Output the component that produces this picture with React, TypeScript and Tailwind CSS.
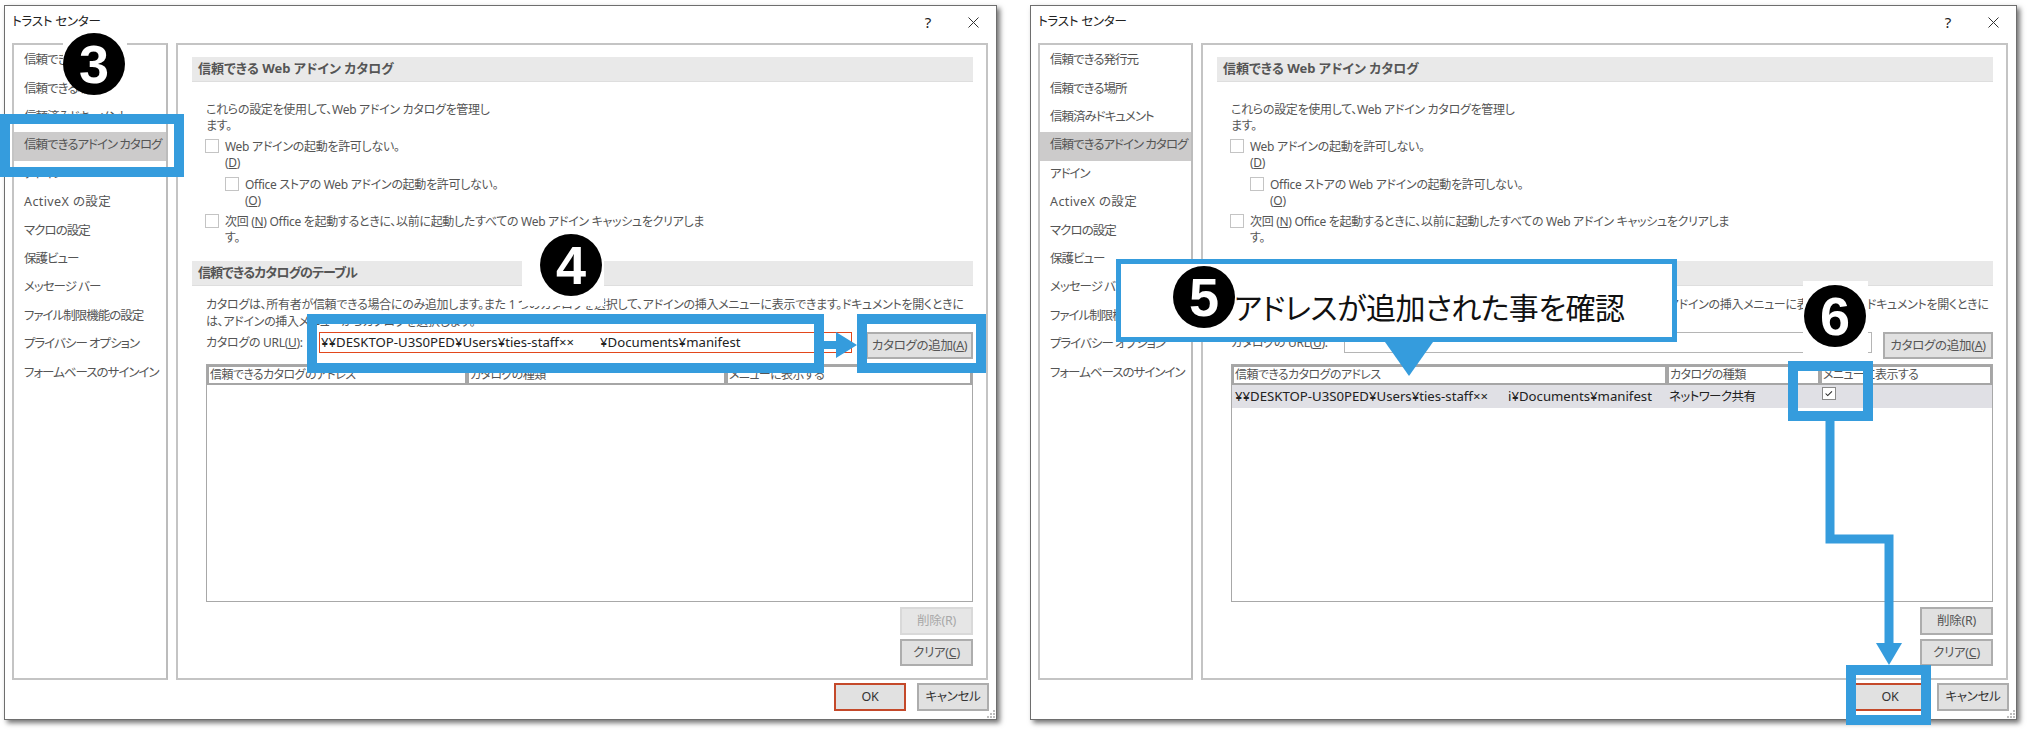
import React from 'react';

const navItems = [
  '信頼できる発行元',
  '信頼できる場所',
  '信頼済みドキュメント',
  '信頼できるアドイン カタログ',
  'アドイン',
  'ActiveX の設定',
  'マクロの設定',
  '保護ビュー',
  'メッセージ バー',
  'ファイル制限機能の設定',
  'プライバシー オプション',
  'フォームベースのサインイン',
];

function Box() {
  return <span className="block w-[14px] h-[14px] shrink-0 border border-[#c4c4c4] bg-white" />;
}

function Button({ children, className }: { children: React.ReactNode; className: string }) {
  return (
    <button className={`flex items-center justify-center border-2 border-[#adadad] bg-[#e1e1e1] text-[12.5px] tracking-[-0.3px] whitespace-nowrap ${className}`}>
      {children}
    </button>
  );
}

function SectionTitle({ children }: { children: React.ReactNode }) {
  return (
    <div className="h-[25px] shrink-0 flex items-center pl-[6px] bg-[#e9e9e9] border-b border-[#dedede] font-bold text-[13px] tracking-normal text-[#555555]">
      {children}
    </div>
  );
}

interface DialogProps {
  widthClass: string;
  navClass: string;
  panelClass: string;
  filled: boolean;
}

function Dialog({ widthClass, navClass, panelClass, filled }: DialogProps) {
  return (
    <div className={`h-[715px] shrink-0 flex flex-col bg-white border border-[#6e6e6e] shadow-[3px_3px_5px_rgba(0,0,0,0.55)] ${widthClass}`}>
      {/* Title bar */}
      <div className="h-[37px] shrink-0 flex items-center pl-[7px] pr-[17px] pb-[4px] text-[12.5px] tracking-[-0.2px] text-[#222222]">
        <span className="flex-1">トラスト センター</span>
        <span className="text-[15px] mr-[37px]">?</span>
        <svg width="11" height="11" viewBox="0 0 11 11" className="stroke-[#333333]">
          <path d="M0.5 0.5 L10.5 10.5 M10.5 0.5 L0.5 10.5" fill="none" strokeWidth="1" />
        </svg>
      </div>

      <div className="h-[637px] shrink-0 flex gap-2 pl-[7px]">
        {/* Nav */}
        <div className={`shrink-0 pt-[2px] border-2 border-[#c4c4c4] border-r-[#bcbcbc] bg-white ${navClass}`}>
          {navItems.map((item, i) => (
            <div
              key={item}
              className={`h-[28.4px] flex items-center pl-[10px] pb-[1px] text-[12.5px] text-[#555555] whitespace-nowrap ${
                i === 5 ? 'tracking-[0.4px]' : 'tracking-[-1px]'
              } ${i === 3 ? 'bg-[#cccbcb] text-[#444444]' : ''}`}
            >
              {item}
            </div>
          ))}
        </div>

        {/* Content */}
        <div className={`shrink-0 flex flex-col pt-[12px] pl-[14px] pr-[13px] pb-[12px] border-2 border-[#c4c4c4] bg-white text-[#555555] text-[12px] tracking-[-0.3px] leading-[15.5px] ${panelClass}`}>
          <SectionTitle>信頼できる Web アドイン カタログ</SectionTitle>
          <div className="pl-[13px] pt-[20px]">
            <p className="pl-[1px]">
              これらの設定を使用して、Web アドイン カタログを管理し
              <br />
              ます。
            </p>
            <div className="flex gap-[6px] mt-[6px]">
              <Box />
              <span>
                Web アドインの起動を許可しない。
                <br />
                (<u>D</u>)
              </span>
            </div>
            <div className="flex gap-[6px] mt-[7px] ml-[20px]">
              <Box />
              <span>
                Office ストアの Web アドインの起動を許可しない。
                <br />
                (<u>O</u>)
              </span>
            </div>
            <div className="flex gap-[6px] mt-[6px]">
              <Box />
              <span>
                次回 (<u>N</u>) Office を起動するときに、以前に起動したすべての Web アドイン キャッシュをクリアしま
                <br />
                す。
              </span>
            </div>
          </div>

          <div className="mt-[16px]">
            <SectionTitle>
              <span className="tracking-[-0.9px]">信頼できるカタログのテーブル</span>
            </SectionTitle>
          </div>

          <div className="flex-1 flex flex-col pl-[14px]">
            <p className="mt-[10px] whitespace-nowrap leading-[17px]">
              カタログは、所有者が信頼できる場合にのみ追加します。また 1 つのカタログを選択して、アドインの挿入メニューに表示できます。ドキュメントを開くときに
              <br />
              は、アドインの挿入メニューからカタログを選択します。
            </p>
            <div className="flex items-start mt-[2px]">
              <span className="w-[113px] shrink-0 pt-[3px] whitespace-nowrap">カタログの URL(<u>U</u>):</span>
              {filled ? (
                <div className="flex-1 h-[21px] flex items-center pl-[1px] border border-[#e2471c] text-[13.2px] tracking-normal text-[#222222] whitespace-nowrap">
                  ¥¥DESKTOP-U3S0PED¥Users¥ties-staff××<span className="w-[26px]" />¥Documents¥manifest
                </div>
              ) : (
                <div className="flex-1 h-[21px] border border-[#b5b5b5]" />
              )}
              <Button className={`h-[27px] shrink-0 ${filled ? 'w-[107px] ml-[14px]' : 'w-[110px] ml-[11px]'}`}>
                <span>カタログの追加(<u>A</u>)</span>
              </Button>
            </div>

            {/* Catalog table */}
            <div className="h-[238px] mt-[5px] flex flex-col border border-[#a8a8a8]">
              <div className="h-[20px] shrink-0 flex gap-[4px] p-[2px] bg-[#a6a6a6] tracking-[-0.6px]">
                <div className={`bg-white pl-[1px] ${filled ? 'w-[256px]' : 'w-[431px]'}`}>信頼できるカタログのアドレス</div>
                <div className={`bg-white pl-[1px] ${filled ? 'w-[255px]' : 'w-[149px]'}`}>カタログの種類</div>
                <div className="flex-1 bg-white pl-[1px]">メニューに表示する</div>
              </div>
              {!filled && (
                <div className="h-[23px] flex gap-[4px] items-center px-[2px] bg-[#e0e0e5] text-[#222222]">
                  <div className="w-[431px] pl-[1px] whitespace-nowrap text-[13.2px] tracking-normal">
                    ¥¥DESKTOP-U3S0PED¥Users¥ties-staff××<span className="inline-block w-[20px]" />i¥Documents¥manifest
                  </div>
                  <div className="w-[149px] text-[12.5px] tracking-[-0.6px]">ネットワーク共有</div>
                  <div className="flex-1 pb-[6px]">
                    <svg width="14" height="13" viewBox="0 0 14 13" className="bg-white border border-[#8a8a8a]">
                      <path d="M3 6.5 L5.5 9 L10.5 4" fill="none" stroke="#222222" strokeWidth="1.2" />
                    </svg>
                  </div>
                </div>
              )}
            </div>

            <div className="flex flex-col items-end gap-[4px] mt-[5px]">
              <Button className={`w-[73px] h-[28px] ${filled ? 'border-[#d9d9d9] bg-[#e6e6e6] text-[#a8a8a8]' : ''}`}>
                <span>削除(R)</span>
              </Button>
              <Button className="w-[73px] h-[27px]">
                <span>クリア(<u>C</u>)</span>
              </Button>
            </div>
          </div>
        </div>
      </div>

      {/* Footer */}
      <div className="relative flex-1 flex justify-end gap-[11px] pt-[3px] pr-[7px] text-[#333333]">
        <Button className="w-[72px] h-[28px] border-[#c4492a]">
          <span>OK</span>
        </Button>
        <Button className="w-[72px] h-[28px]">
          <span>キャンセル</span>
        </Button>
        <svg width="9" height="9" viewBox="0 0 9 9" className="absolute right-0 bottom-0 fill-[#bdbdbd]">
          <rect x="6" y="0" width="2" height="2" />
          <rect x="3" y="3" width="2" height="2" />
          <rect x="6" y="3" width="2" height="2" />
          <rect x="0" y="6" width="2" height="2" />
          <rect x="3" y="6" width="2" height="2" />
          <rect x="6" y="6" width="2" height="2" />
        </svg>
      </div>
    </div>
  );
}

function Badge({ n, className }: { n: string; className: string }) {
  return (
    <div className={`absolute w-[62px] h-[62px] rounded-full bg-black flex items-center justify-center text-white text-[54px] font-bold leading-none font-['Liberation_Sans',sans-serif] ${className}`}>
      {n}
    </div>
  );
}

export default function App() {
  return (
    <div className="relative w-[2032px] h-[734px] overflow-hidden bg-white flex gap-[33px] pt-[5px] pl-[4px] font-['Noto_Sans','Noto_Sans_CJK_JP',sans-serif] [font-feature-settings:'palt']">
      <Dialog widthClass="w-[993px]" navClass="w-[156px]" panelClass="w-[812px]" filled />
      <Dialog widthClass="w-[987px]" navClass="w-[155px]" panelClass="w-[807px]" filled={false} />

      {/* Step 3 */}
      <div className="absolute left-[63px] top-[43px] w-[64px] h-[20px] bg-white" />
      <Badge n="3" className="left-[63px] top-[33px]" />
      <div className="absolute left-0 top-[114px] w-[184px] h-[63px] border-[10px] border-[#359cdd]" />

      {/* Step 4 */}
      <div className="absolute left-[522px] top-[228px] w-[82px] h-[78px] bg-white" />
      <Badge n="4" className="left-[540px] top-[234px]" />
      <div className="absolute left-[307px] top-[314px] w-[517px] h-[59px] border-[10px] border-[#359cdd]" />
      <div className="absolute left-[857px] top-[314px] w-[129px] h-[59px] border-[10px] border-[#359cdd]" />
      <svg width="33" height="28" viewBox="0 0 33 28" className="absolute left-[824px] top-[331px]">
        <path d="M0 10 H12 V1 L33 14 L12 27 V18 H0 Z" fill="#359cdd" />
      </svg>

      {/* Step 5 */}
      <div className="absolute left-[1116px] top-[259px] w-[561px] h-[83px] border-[5px] border-[#359cdd] bg-white flex items-end pl-[113px] pb-[9px] text-[30px] tracking-[-0.5px] leading-[40px] text-[#111111] whitespace-nowrap">
        アドレスが追加された事を確認
      </div>
      <Badge n="5" className="left-[1173px] top-[266px]" />
      <svg width="48" height="34" viewBox="0 0 48 34" className="absolute left-[1385px] top-[342px]">
        <path d="M0 0 H48 L24 34 Z" fill="#359cdd" />
      </svg>

      {/* Step 6 */}
      <div className="absolute left-[1803px] top-[281px] w-[65px] h-[72px] bg-white" />
      <Badge n="6" className="left-[1804px] top-[285px]" />
      <div className="absolute left-[1788px] top-[361px] w-[85px] h-[60px] border-[10px] border-[#359cdd]" />
      <svg width="80" height="250" viewBox="0 0 80 250" className="absolute left-[1825px] top-[418px]">
        <path d="M5 0 V121 H64 V226" fill="none" stroke="#359cdd" strokeWidth="9" />
        <path d="M51 225 H77 L64 247 Z" fill="#359cdd" />
      </svg>
      <div className="absolute left-[1846px] top-[665px] w-[85px] h-[60px] border-[10px] border-[#359cdd]" />
    </div>
  );
}
